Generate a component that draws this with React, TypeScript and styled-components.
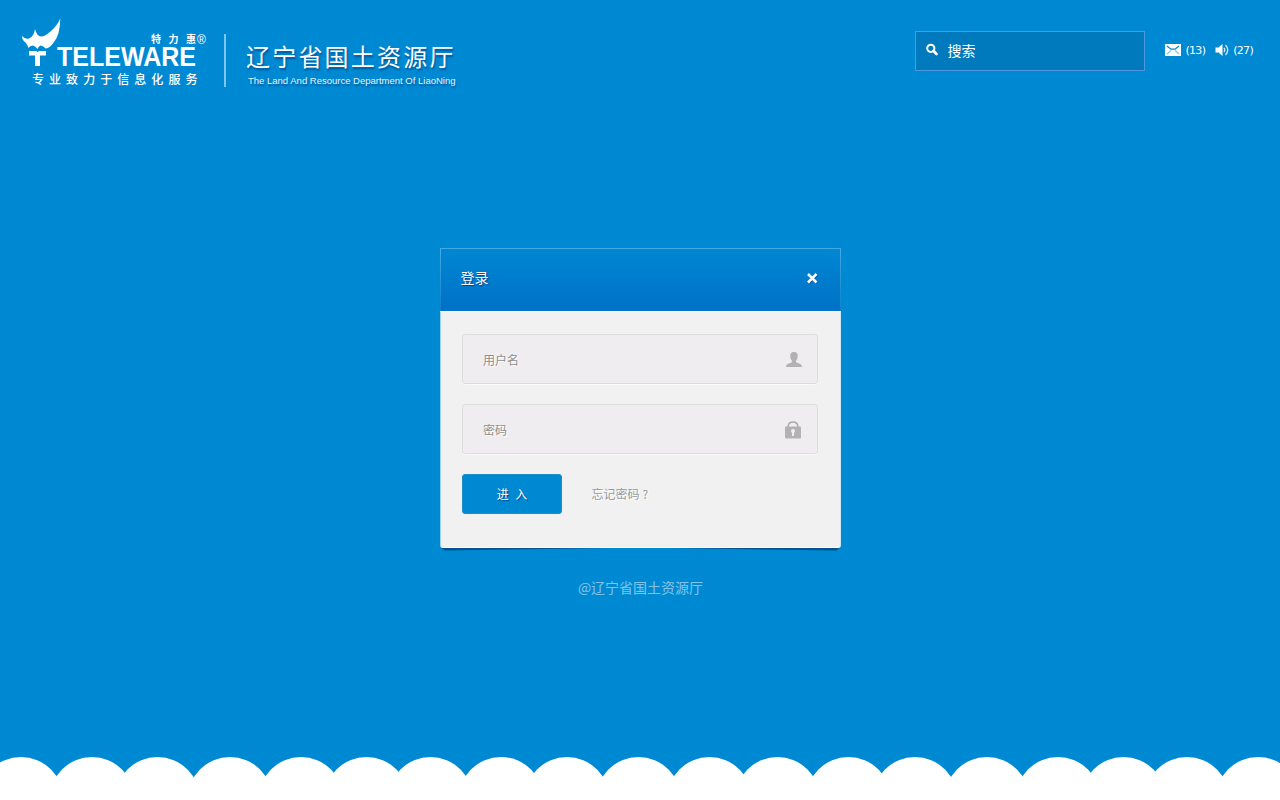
import React from "react";
import styled, { createGlobalStyle } from "styled-components";

const cjk = `"Noto Sans CJK SC", sans-serif`;

const GlobalStyle = createGlobalStyle`
  * { box-sizing: border-box; }
  body { margin: 0; background: #0089d3; font-family: "Liberation Sans", ${cjk}; }
  input, button { font: inherit; }
`;

const Page = styled.div`
  height: 800px;
  display: flex;
  flex-direction: column;
  background: #0089d3;
  overflow: hidden;
`;

const Header = styled.header`
  height: 248px;
  display: flex;
  align-items: flex-start;
  justify-content: space-between;
  padding: 0 27px 0 16px;
`;

const Brand = styled.div`
  display: flex;
  padding-top: 14px;
`;

const Logo = styled.svg`
  display: block;
  width: 208px;
  height: 76px;
`;

const Department = styled.div`
  margin-top: 20px;
  height: 53px;
  padding-left: 21px;
  border-left: 2px solid #7fc4e9;
  color: #fff;
  white-space: nowrap;
  text-shadow: 1px 2px 2px rgba(0, 50, 110, 0.6);
`;

const DepartmentName = styled.h1`
  margin: 6px 0 0 -1px;
  font: 400 24px/32px ${cjk};
  letter-spacing: 2.2px;
`;

const DepartmentSub = styled.p`
  margin: 3px 0 0 1px;
  font-size: 9.5px;
  line-height: 12px;
  color: #e6f4fb;
`;

const Tools = styled.div`
  display: flex;
  align-items: center;
  padding-top: 31px;
`;

const SearchBox = styled.label`
  width: 230px;
  height: 40px;
  display: flex;
  align-items: center;
  gap: 8px;
  margin-right: 20px;
  padding: 0 10px 3px;
  background: #007abc;
  border: 1px solid #4f97df;
`;

const SearchInput = styled.input`
  width: 160px;
  padding: 0;
  border: 0;
  outline: 0;
  background: transparent;
  font: 14px/20px ${cjk};
  color: #fff;
  &::placeholder { color: #fff; opacity: 1; }
`;

const Notice = styled.a<{ $gap: number }>`
  display: flex;
  align-items: center;
  gap: 4px;
  margin-right: ${(p) => p.$gap}px;
  font: 11px/14px "DejaVu Sans", sans-serif;
  letter-spacing: -0.7px;
  color: #fff;
`;

const NoticeIcon = styled.svg`
  margin-bottom: 2px;
`;

const Main = styled.main`
  flex: 1;
  display: flex;
  flex-direction: column;
  align-items: center;
`;

const Dialog = styled.section`
  position: relative;
  width: 401px;
  height: 300px;
  display: flex;
  flex-direction: column;
`;

const CornerShadow = styled.svg`
  position: absolute;
  left: 0;
  bottom: -3px;
  width: 401px;
  height: 6px;
`;

const DialogHead = styled.div`
  height: 63px;
  display: flex;
  align-items: center;
  justify-content: space-between;
  padding: 0 22px 3px 20px;
  border: 1px solid #3fa6e0;
  border-bottom: 0;
  border-image: linear-gradient(#45ace2, #0f7fcb) 1 1 0 1;
  background: linear-gradient(#0087d2, #0071c7);
`;

const DialogTitle = styled.h2`
  margin: -3px 0 0;
  font: 400 14px/20px ${cjk};
  color: #fff;
  text-shadow: 1px 1px 1px rgba(0, 30, 100, 0.6);
`;

const DialogBody = styled.form`
  flex: 1;
  position: relative;
  padding: 22px 21px 0;
  background: #f1f1f1;
  border: 1px solid #fff;
  border-left-color: #9fd2ee;
  border-right-color: #cfe8f6;
  border-radius: 0 0 3px 3px;
`;

const Field = styled.label`
  width: 356px;
  height: 50px;
  display: flex;
  align-items: center;
  justify-content: space-between;
  margin-bottom: 20px;
  padding: 1px 15px 0 20.5px;
  border: 1px solid #dddcdd;
  border-radius: 3px;
  background: #efedf0;
  box-shadow: 0 1px 0 #fafafa;
`;

const FieldInput = styled.input`
  width: 240px;
  padding: 0;
  border: 0;
  outline: 0;
  background: transparent;
  font: 12px/18px ${cjk};
  text-shadow: 1px 1px 0 #fff;
  &::placeholder { color: #8e8e8e; opacity: 1; }
`;

const Actions = styled.div`
  display: flex;
  align-items: center;
  gap: 30px;
`;

const Submit = styled.button`
  width: 100px;
  height: 40px;
  padding: 0 0 0 1px;
  border: 1px solid #1a8cca;
  border-radius: 3px;
  background: #0089d3;
  color: #fff;
  font: 12px/18px ${cjk};
  word-spacing: 4px;
  text-shadow: 1px 1px 1px rgba(0, 40, 110, 0.7);
`;

const Forgot = styled.a`
  display: flex;
  gap: 3px;
  font: 12px/18px ${cjk};
  color: #999;
  text-shadow: 1px 1px 0 #fff;
`;

const Copyright = styled.p`
  margin: 29px 0 0 1px;
  font: 14px/20px ${cjk};
  color: #80c4e9;
`;

const Clouds = styled.svg`
  display: block;
  width: 1280px;
  height: 44px;
`;

/* Uneven spacing makes some valleys between the clouds shallower than others. */
const cloudCenters = [
  21, 92, 157.5, 230, 301, 366.5, 430.5, 501, 567, 638.5, 709.5, 777.5, 848.5,
  915, 987, 1058, 1123.5, 1187, 1258,
];

export default function App() {
  return (
    <Page>
      <GlobalStyle />
      <Header>
        <Brand>
          <Logo viewBox="16 14 208 76" fill="#fff">
            <path d="M22 36Q25 39.500 29 38.500Q34 36.500 35 29Q37 36.500 41 36.500Q45 36.500 51 31Q57 26 60.300 18.500Q60 35 54 42Q50 48 45.500 48.500Q43 45.500 40.500 45.500Q38.500 46 37.500 49Q35 45.500 32 45.500Q29.500 46 28.500 48Q27.500 45 25.500 42.500Q22 40 22 36Z" />
            <path d="M29 51H36L37.500 52L39 51H46V55.500H40V66H35V55.500H29Z" />
            <text x="57" y="65.500" fontFamily="Liberation Sans" fontWeight="700" fontSize="27.500" textLength="139" lengthAdjust="spacingAndGlyphs">TELEWARE</text>
            <text x="151" y="43" fontFamily="Noto Sans CJK SC" fontWeight="700" fontSize="10" letterSpacing="7.500">特力惠</text>
            <text x="197" y="43.500" fontFamily="Liberation Sans" fontSize="12">®</text>
            <text x="32" y="84" fontFamily="Noto Sans CJK SC" fontWeight="500" fontSize="12" letterSpacing="5.050">专业致力于信息化服务</text>
          </Logo>
          <Department>
            <DepartmentName>辽宁省国土资源厅</DepartmentName>
            <DepartmentSub>The Land And Resource Department Of LiaoNing</DepartmentSub>
          </Department>
        </Brand>
        <Tools>
          <SearchBox>
            <svg width="13" height="13" viewBox="0 0 13 13" fill="none" stroke="#fff">
              <circle cx="4.800" cy="5.300" r="3.600" strokeWidth="2" />
              <path d="M7.500 8L10.500 11" strokeWidth="2.800" strokeLinecap="round" />
            </svg>
            <SearchInput placeholder="搜索" />
          </SearchBox>
          <Notice $gap={10}>
            <NoticeIcon width="16" height="12" viewBox="0 0 16 12">
              <rect width="16" height="12" fill="#fff" />
              <path d="M2 2L6 5.200H10L14 2" fill="none" stroke="#0089d3" strokeWidth="1.300" />
              <path d="M2 10L6 6.500M14 10L10 6.500" fill="none" stroke="#7fc4e9" strokeWidth="1.100" />
            </NoticeIcon>
            (13)
          </Notice>
          <Notice $gap={0}>
            <NoticeIcon width="14" height="12" viewBox="0 0 14 12">
              <path d="M0.500 3.500H3.500L7.500 0V12L3.500 8.500H0.500Z" fill="#fff" />
              <path d="M9 4Q10.500 6 9 8M10.500 1Q15 6 10.500 11" fill="none" stroke="#d5ecf8" strokeWidth="1.300" />
            </NoticeIcon>
            (27)
          </Notice>
        </Tools>
      </Header>
      <Main>
        <Dialog>
          <CornerShadow viewBox="0 0 401 6">
            <path d="M1 0H170V3L5 5.500Q2 5 1 2ZM400 0H231V3L396 5.500Q399 5 400 2Z" fill="#04528f" />
          </CornerShadow>
          <DialogHead>
            <DialogTitle>登录</DialogTitle>
            <svg width="11" height="11" viewBox="0 0 11 11" fill="none">
              <path d="M2 2L10 10M10 2L2 10" stroke="#0058ac" strokeWidth="2.500" />
              <path d="M1 1L9.500 9.500M9.500 1L1 9.500" stroke="#fff" strokeWidth="2.500" />
            </svg>
          </DialogHead>
          <DialogBody>
            <Field>
              <FieldInput placeholder="用户名" />
              <svg width="16" height="16" viewBox="0 0 16 16" fill="#b2b2b2">
                <path d="M8 0C5 0 4 2 4.300 4.500C4.400 7 5.500 8 6 8.800V10C5 11.500 0 11 0 15H16C16 11 11 11.500 10 10V8.800C10.500 8 11.600 7 11.700 4.500C12 2 11 0 8 0Z" />
              </svg>
            </Field>
            <Field>
              <FieldInput type="password" placeholder="密码" />
              <svg width="17" height="18" viewBox="0 0 17 18">
                <path d="M3 7V5.500Q3.500 1 8 1T13 5.500V7" fill="none" stroke="#aaa" strokeWidth="1.500" />
                <rect x="0" y="5.500" width="16" height="12" rx="1" fill="#b2b2b2" />
                <circle cx="8" cy="10" r="2" fill="#f0eef1" />
                <path d="M7 10.500H9V15H7Z" fill="#f0eef1" />
              </svg>
            </Field>
            <Actions>
              <Submit type="button">进 入</Submit>
              <Forgot>
                <span>忘记密码</span>
                <span>?</span>
              </Forgot>
            </Actions>
          </DialogBody>
        </Dialog>
        <Copyright>@辽宁省国土资源厅</Copyright>
      </Main>
      <Clouds viewBox="0 756 1280 44" fill="#fff">
        <rect y="778" width="1280" height="22" />
        {cloudCenters.map((cx) => (
          <circle key={cx} cx={cx} cy="799.500" r="42.500" />
        ))}
      </Clouds>
    </Page>
  );
}
